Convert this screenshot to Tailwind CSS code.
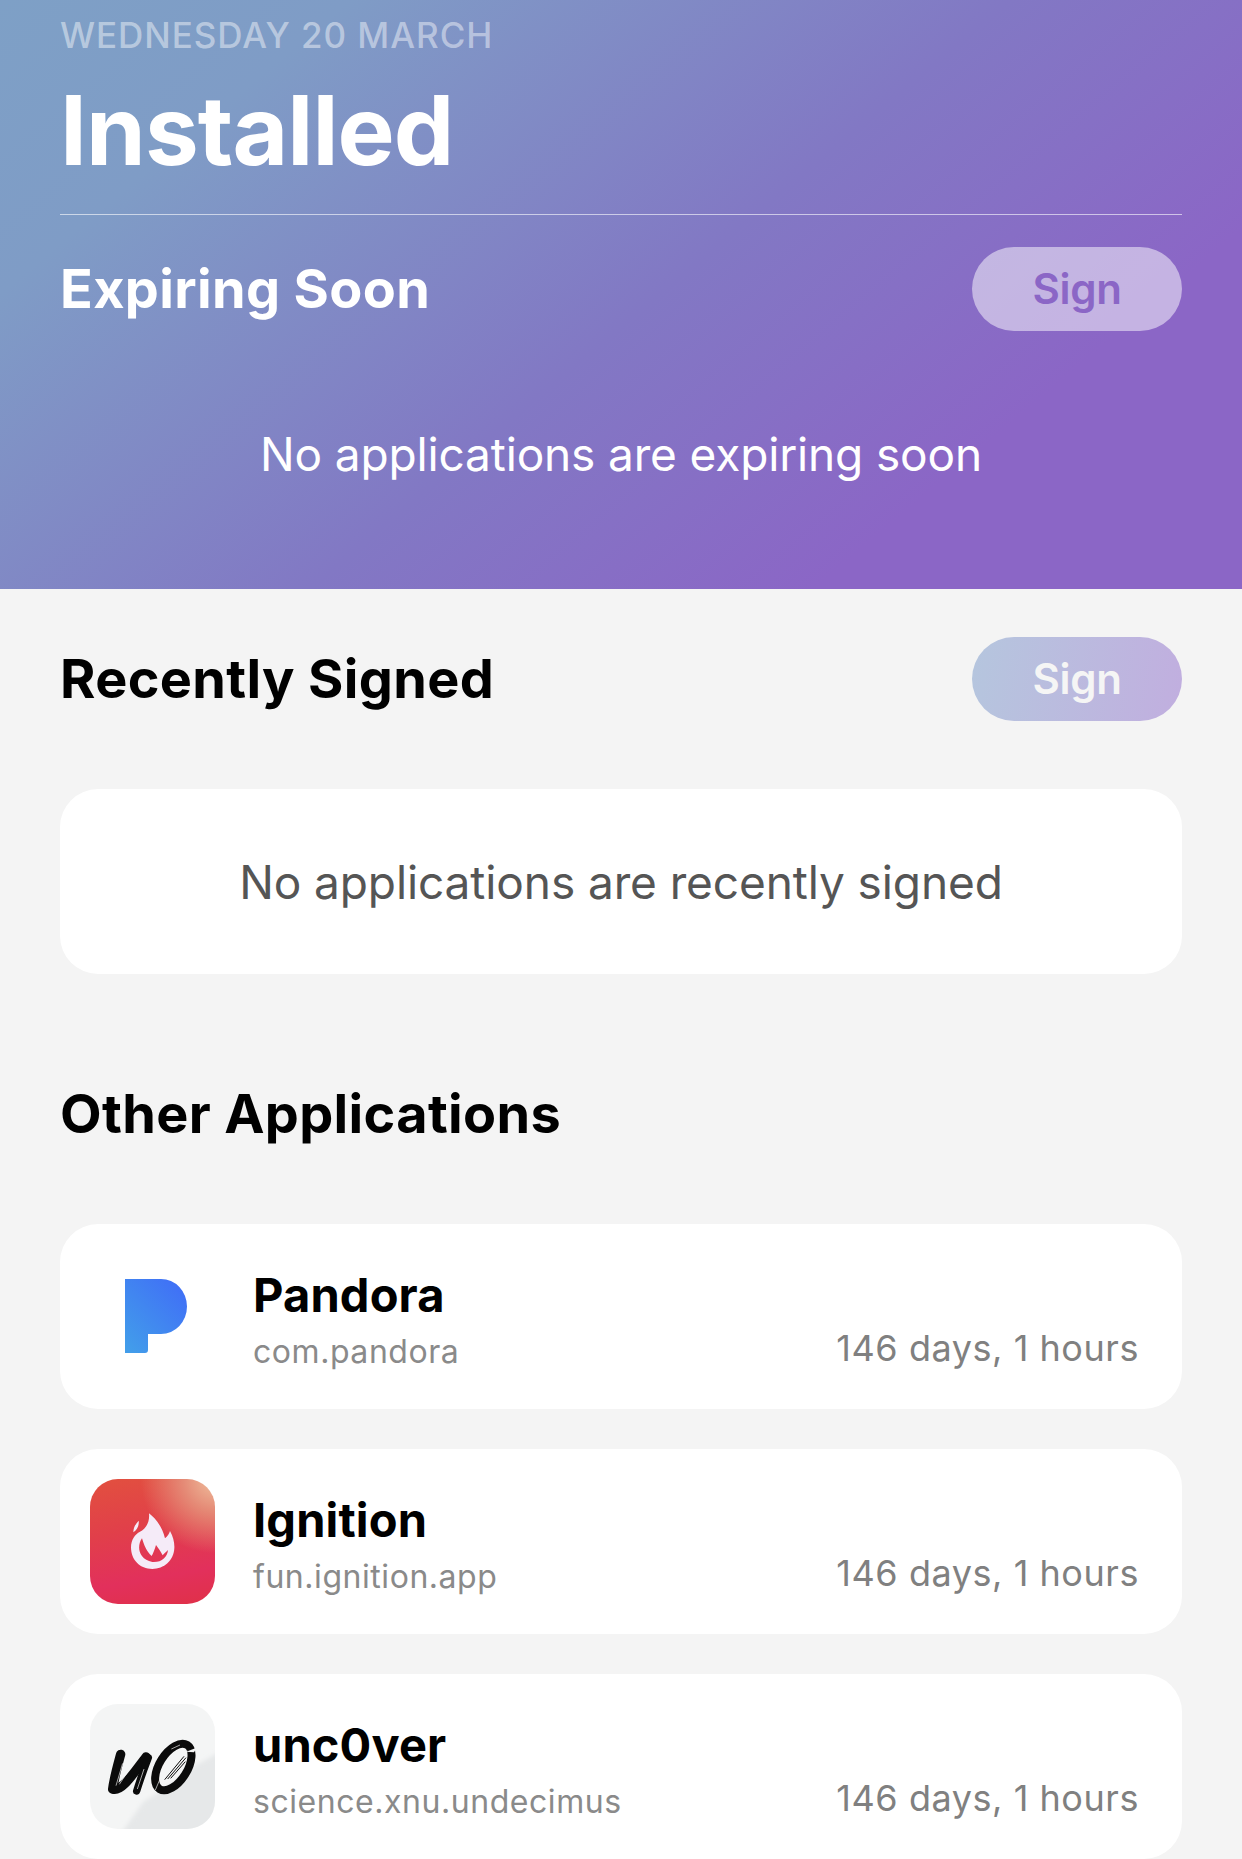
<!DOCTYPE html>
<html><head><meta charset="utf-8"><script src="https://cdn.jsdelivr.net/npm/@tailwindcss/browser@4"></script></head>
<body class="m-0 bg-[#f4f4f4] font-['Inter','Liberation_Sans',sans-serif] antialiased">
<div class="w-[1242px] h-[1859px] overflow-hidden">
<header class="h-[589px] px-[60px] bg-[linear-gradient(140deg,#7ea0c6_0%,#7f9cc6_18%,#8278c4_52%,#8b66c6_78%,#8b66c6_100%)]">
  <div class="h-[70px] flex items-center text-[35px] leading-none font-medium text-white/45 tracking-[0.95px]">WEDNESDAY 20 MARCH</div>
  <h1 class="h-[120px] flex items-center text-[96px] leading-none font-bold text-white tracking-[-0.9px]">Installed</h1>
  <div class="h-[25px] border-b border-white/60"></div>
  <div class="mt-[32px] h-[84px] flex items-center justify-between">
    <h2 class="text-[54px] leading-none font-bold text-white tracking-[0.35px]">Expiring Soon</h2>
    <div class="w-[210px] h-[84px] pb-[2px] rounded-full bg-white/50 flex items-center justify-center text-[42px] font-semibold text-[#8b66c6] tracking-[-0.3px]">Sign</div>
  </div>
  <p class="mt-[83px] text-center text-[46px] leading-[80px] text-white tracking-[-0.15px]">No applications are expiring soon</p>
</header>
<main class="px-[60px]">
  <div class="mt-[48px] h-[84px] flex items-center justify-between">
    <h2 class="text-[54px] leading-none font-bold text-black tracking-[0.35px]">Recently Signed</h2>
    <div class="w-[210px] h-[84px] pb-[2px] rounded-full bg-[linear-gradient(100deg,#b5c6de,#c1aedf)] flex items-center justify-center text-[42px] font-semibold text-[#f5f5f5] tracking-[-0.3px]">Sign</div>
  </div>
  <div class="mt-[68px] h-[185px] pt-[1px] rounded-[38px] bg-white flex items-center justify-center text-[46px] text-[#555] tracking-[-0.1px]">No applications are recently signed</div>
  <h2 class="mt-[90px] h-[100px] flex items-center text-[54px] leading-none font-bold text-black tracking-[0.35px]">Other Applications</h2>
  <div class="mt-[60px] flex flex-col gap-[40px]">
    <section class="h-[185px] rounded-[38px] bg-white pl-[30px] pr-[43px] flex items-center">
      <svg class="w-[125px] h-[125px] shrink-0" viewBox="0 0 125 125"><defs><linearGradient id="p" x1="0.1" y1="1" x2="0.9" y2="0.1"><stop offset="0" stop-color="#429dea"/><stop offset="1" stop-color="#4070f6"/></linearGradient></defs><path fill="url(#p)" d="M35 25H71a26 27.5 0 0 1 0 55H58V96a3 3 0 0 1-3 3H35Z"/></svg>
      <div class="ml-[38px] flex-1 self-start pt-[45px]">
        <div class="text-[47px] leading-[52px] font-bold text-black tracking-[0.15px]">Pandora</div>
        <div class="mt-[11px] text-[32px] leading-[40px] text-[#8a8a8a] tracking-[0.55px]">com.pandora</div>
      </div>
      <div class="self-start mt-[102px] text-[36px] leading-[44px] text-[#808080] tracking-[0.55px]">146 days, 1 hours</div>
    </section>
    <section class="h-[185px] rounded-[38px] bg-white pl-[30px] pr-[43px] flex items-center">
      <div class="w-[125px] h-[125px] shrink-0 rounded-[28px] overflow-hidden bg-[radial-gradient(circle_at_100%_0%,#efc09e_0%,#e58a76_18%,transparent_42%),linear-gradient(170deg,#e2503f_0%,#e13f4a_40%,#e2305c_75%,#e03048_100%)]">
        <svg class="w-full h-full" viewBox="30 27 375 375"><path fill="#f5ebf8" fill-rule="evenodd" d="M207 130C225 145 245 165 255 205C262 200 268 190 270 183C280 200 284 220 283 235C281 272 252 297 217 297C180 297 153 270 153 232C153 210 165 192 180 185C195 178 210 160 207 130ZM186 205C170 228 174 266 217 276C245 278 262 262 264 240C258 246 252 251 248 256C243 245 235 235 228 225C224 238 220 250 215 258C200 245 192 225 186 205ZM176 152C178 165 172 180 160 187C160 172 168 160 176 152Z"/></svg>
      </div>
      <div class="ml-[38px] flex-1 self-start pt-[45px]">
        <div class="text-[47px] leading-[52px] font-bold text-black tracking-[0.15px]">Ignition</div>
        <div class="mt-[11px] text-[32px] leading-[40px] text-[#8a8a8a] tracking-[0.55px]">fun.ignition.app</div>
      </div>
      <div class="self-start mt-[102px] text-[36px] leading-[44px] text-[#808080] tracking-[0.55px]">146 days, 1 hours</div>
    </section>
    <section class="h-[185px] rounded-[38px] bg-white pl-[30px] pr-[43px] flex items-center">
      <div class="w-[125px] h-[125px] shrink-0 rounded-[28px] overflow-hidden bg-[#f4f5f5]">
        <svg class="w-full h-full" viewBox="30 27 375 375"><defs><filter id="b"><feGaussianBlur stdDeviation="6"/></filter></defs><path filter="url(#b)" fill="#e6e8e9" d="M420 170L340 215L270 270L190 320L120 420H420Z"/><g fill="none" stroke="#0b0b0b" stroke-linecap="round" stroke-linejoin="round"><path stroke-width="28" d="M122 178C112 215 102 250 98 282C125 292 160 235 198 186"/><path stroke-width="22" d="M205 188C192 222 178 262 170 288"/><ellipse cx="280" cy="216" rx="42" ry="78" transform="rotate(32 280 216)" stroke-width="24"/></g><path fill="#f4f5f5" d="M246 264C258 226 286 188 322 166C316 210 288 248 246 264Z"/><path fill="none" stroke="#0b0b0b" stroke-width="3" d="M254 254L312 184M263 252L318 188M272 250L316 200"/><path fill="none" stroke="#f4f5f5" stroke-width="2" d="M108 272L128 205M118 268L140 235M172 282L192 222M226 285L246 238M300 150L274 162"/><path fill="#f4f5f5" d="M318 170L350 158L342 172Z"/></svg>
      </div>
      <div class="ml-[38px] flex-1 self-start pt-[45px]">
        <div class="text-[47px] leading-[52px] font-bold text-black tracking-[0.15px]">unc0ver</div>
        <div class="mt-[11px] text-[32px] leading-[40px] text-[#8a8a8a] tracking-[0.55px]">science.xnu.undecimus</div>
      </div>
      <div class="self-start mt-[102px] text-[36px] leading-[44px] text-[#808080] tracking-[0.55px]">146 days, 1 hours</div>
    </section>
  </div>
</main>
</div>
</body></html>
